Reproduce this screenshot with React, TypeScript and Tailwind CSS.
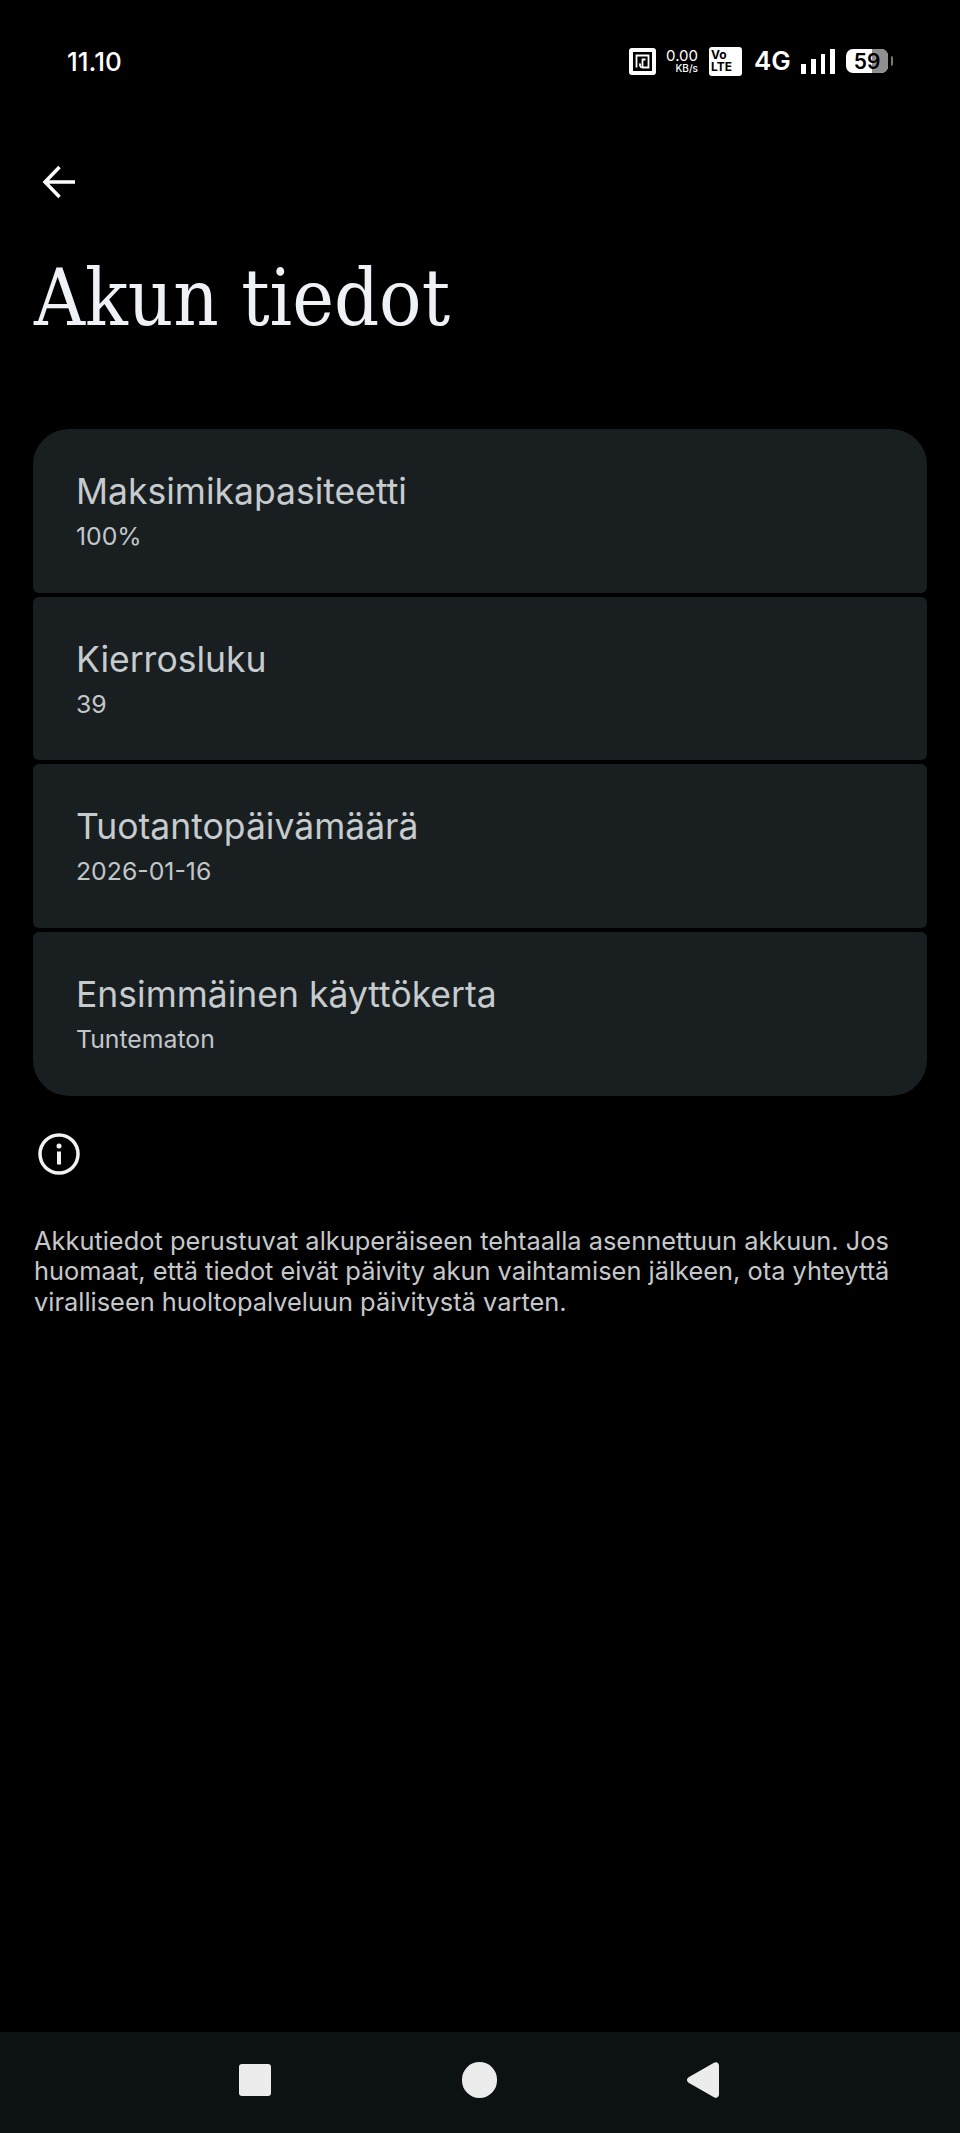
import React from 'react'

const rows = [
	{ title: 'Maksimikapasiteetti', value: '100%', round: 'rounded-t-[36px] rounded-b-[6px]' },
	{ title: 'Kierrosluku', value: '39', round: 'rounded-[6px]' },
	{ title: 'Tuotantopäivämäärä', value: '2026-01-16', round: 'rounded-[6px]' },
	{ title: 'Ensimmäinen käyttökerta', value: 'Tuntematon', round: 'rounded-t-[6px] rounded-b-[36px]' },
]

function StatusBar() {
	return (
		<div className="flex h-[122px] items-center justify-between pl-[67px] pr-[67px] text-white">
			<span className="mt-[2px] text-[26px] font-medium leading-none">11.10</span>
			<div className="flex items-center">
				<svg width="27" height="27" viewBox="0 0 27 27" fill="none" className="mr-[12px]">
					<rect x="0" y="0" width="27" height="27" rx="3" fill="#fff" />
					<rect x="4" y="4" width="19" height="19" fill="#000" />
					<path d="M7.500 19.500V7.500h12v12H13.500M13.500 19.500c-3 0-3-3-2-4M13.500 19.500v-8h3" stroke="#fff" strokeWidth="1.800" />
				</svg>
				<div className="mr-[11px] flex w-[30px] flex-col items-end leading-none">
					<span className="text-[15px] leading-[15px]">0.00</span>
					<span className="text-[10px] font-medium leading-[11px]">KB/s</span>
				</div>
				<div className="mr-[12px] flex h-[29px] w-[33px] flex-col justify-center rounded-[3px] bg-white pl-[2px] text-[12px] font-bold leading-[12px] text-black">
					<span>Vo</span>
					<span>LTE</span>
				</div>
				<span className="mr-[11px] w-[36px] text-[26px] font-semibold leading-none">4G</span>
				<svg width="34" height="25" viewBox="0 0 34 25" fill="#fff" className="mr-[11px]">
					<rect x="0" y="15" width="5" height="10" />
					<rect x="10" y="10" width="5" height="15" />
					<rect x="20" y="5" width="4" height="20" />
					<rect x="29" y="0" width="5" height="25" />
				</svg>
				<div className="relative flex h-[24px] w-[42px] items-center justify-center overflow-hidden rounded-[7px] bg-white">
					<div className="absolute inset-y-0 right-0 w-[16px] bg-[#8f8f8f]" />
					<span className="relative text-[21px] font-semibold leading-none text-black">59</span>
				</div>
				<div className="ml-[3px] h-[10px] w-[2px] rounded-r-sm bg-[#777]" />
			</div>
		</div>
	)
}

function Row({ title, value, round }: { title: string; value: string; round: string }) {
	return (
		<div className={`h-[163.67px] bg-[#191e21] pl-[43px] pt-[40px] ${round}`}>
			<p className="text-[35.500px] leading-[46px] text-[#c6cbce]">{title}</p>
			<p className="text-[24.800px] leading-[42px] text-[#c2c6c9]">{value}</p>
		</div>
	)
}

export default function App() {
	return (
		<div className="flex h-[2133px] flex-col bg-black font-['Inter',sans-serif]">
			<StatusBar />
			<div className="flex-1 px-[33px]">
				<svg width="34" height="34" viewBox="0 0 34 34" fill="none" stroke="#fff" strokeWidth="3.500" className="ml-[9px] mt-[43px]">
					<path d="M33 17H3M17.500 2 3 17l14.500 15" />
				</svg>
				<h1 className="ml-[1px] mt-[54px] font-['DejaVu_Serif',serif] text-[78.500px] leading-[90px] [font-stretch:condensed] text-[#eef2f6]">Akun tiedot</h1>
				<div className="mt-[86px] flex flex-col gap-[4px]">
					{rows.map((row) => (
						<Row key={row.title} {...row} />
					))}
				</div>
				<svg width="42" height="42" viewBox="0 0 42 42" fill="none" className="mt-[37px] ml-[5px]">
					<circle cx="21" cy="21" r="19" stroke="#f2f2f2" strokeWidth="3.500" />
					<circle cx="21" cy="13" r="2.500" fill="#f2f2f2" />
					<rect x="19" y="18.500" width="4" height="13" fill="#f2f2f2" />
				</svg>
				<p className="ml-[1px] mt-[51px] text-[25.400px] leading-[30.500px] text-[#c5c8ca]">
					Akkutiedot perustuvat alkuperäiseen tehtaalla asennettuun akkuun. Jos huomaat, että tiedot eivät päivity akun vaihtamisen jälkeen, ota yhteyttä viralliseen huoltopalveluun päivitystä varten.
				</p>
			</div>
			<div className="flex h-[101px] items-center justify-between bg-[#0c1213] pb-[5px] pl-[239px] pr-[241px]">
				<div className="h-[32px] w-[32px] rounded-[3px] bg-[#ececec]" />
				<div className="h-[36px] w-[35px] rounded-full bg-[#ececec]" />
				<svg width="32" height="36" viewBox="0 0 32 36" fill="#ececec">
					<path d="M27 .8c2.500-1.500 5 0 5 3v28.400c0 3-2.500 4.500-5 3L2 21c-2.600-1.500-2.600-4.500 0-6z" />
				</svg>
			</div>
		</div>
	)
}
